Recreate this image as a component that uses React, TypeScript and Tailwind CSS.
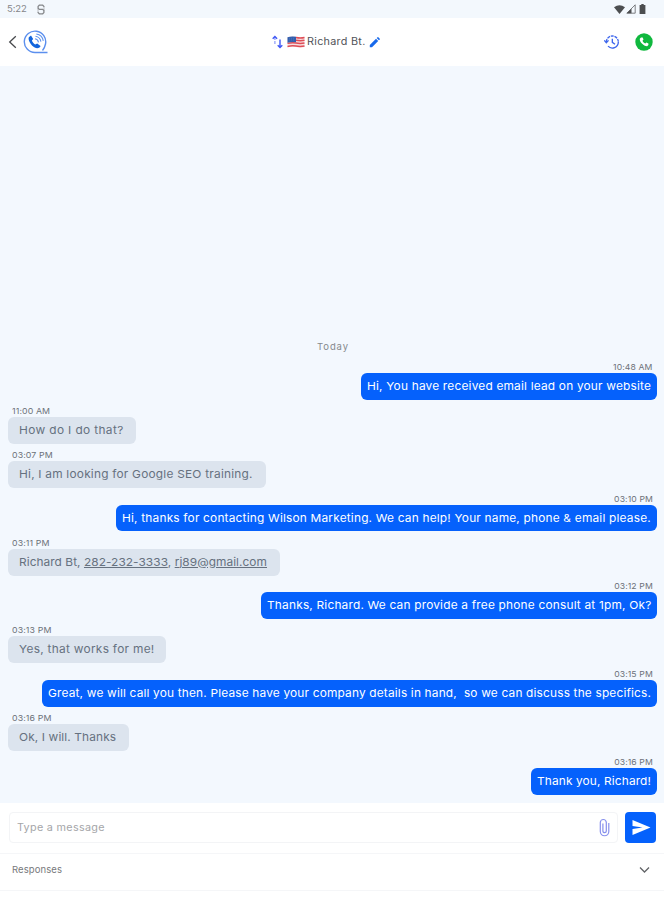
import clsx from "clsx";
import type { ReactNode } from "react";

type Message = {
  time: string;
  mine?: boolean;
  body: ReactNode;
  width: string;
  tracking: string;
};

const messages: Message[] = [
  {
    time: "10:48 AM",
    mine: true,
    body: "Hi, You have received email lead on your website",
    width: "w-[296px]",
    tracking: "tracking-[0.18px]",
  },
  {
    time: "11:00 AM",
    body: "How do I do that?",
    width: "w-[128px]",
    tracking: "tracking-[0.34px]",
  },
  {
    time: "03:07 PM",
    body: "Hi, I am looking for Google SEO training.",
    width: "w-[258px]",
    tracking: "tracking-[0.2px]",
  },
  {
    time: "03:10 PM",
    mine: true,
    body: "Hi, thanks for contacting Wilson Marketing. We can help! Your name, phone & email please.",
    width: "w-[541px]",
    tracking: "tracking-[0.18px]",
  },
  {
    time: "03:11 PM",
    body: (
      <>
        Richard Bt, <span className="underline">282-232-3333</span>,{" "}
        <span className="underline">rj89@gmail.com</span>
      </>
    ),
    width: "w-[272px]",
    tracking: "tracking-[0.05px]",
  },
  {
    time: "03:12 PM",
    mine: true,
    body: "Thanks, Richard. We can provide a free phone consult at 1pm, Ok?",
    width: "w-[396px]",
    tracking: "tracking-[0.18px]",
  },
  {
    time: "03:13 PM",
    body: "Yes, that works for me!",
    width: "w-[158px]",
    tracking: "tracking-[0.26px]",
  },
  {
    time: "03:15 PM",
    mine: true,
    body: "Great, we will call you then. Please have your company details in hand,  so we can discuss the specifics.",
    width: "w-[615px]",
    tracking: "tracking-[0.16px]",
  },
  {
    time: "03:16 PM",
    body: "Ok, I will. Thanks",
    width: "w-[121px]",
    tracking: "tracking-[0.1px]",
  },
  {
    time: "03:16 PM",
    mine: true,
    body: "Thank you, Richard!",
    width: "w-[126px]",
    tracking: "tracking-[0.12px]",
  },
];

function StatusBar() {
  return (
    <div className="flex h-[18px] shrink-0 items-center bg-[#f3f8fd] pr-[18px] pl-[7px] text-[#85878a]">
      <span className="w-[20px] text-[9.5px] leading-none tracking-[-0.1px]">5:22</span>
      <svg className="ml-[9px]" width="10" height="11" viewBox="0 0 10 11" fill="none" stroke="currentColor">
        <path d="M7.900 3.300V2.400L6.700 1.200H3.300L2.100 2.400v1.800l1.200 1.200h3.400l1.200 1.200v2L6.700 9.800H3.300L2.100 8.600v-.9" strokeWidth="1.300" />
        <path d="M2 4.500v3M8 3.500v3" strokeWidth=".5" />
      </svg>
      <div className="ml-auto flex items-center text-[#4c4e50]">
        <svg width="11" height="9" viewBox="0 0 11 9" fill="currentColor">
          <path d="M0 2.3Q5.5-1.8 11 2.3L5.5 9z" />
        </svg>
        <svg className="ml-px" width="10" height="10" viewBox="0 0 10 10">
          <path d="M.8 9.2 9.2.8v8.4z" fill="none" stroke="currentColor" strokeWidth=".7" />
          <path d="M.8 9.2 5.5 4.5v4.7z" fill="currentColor" />
        </svg>
        <svg className="ml-[3px]" width="7" height="10" viewBox="0 0 7 10" fill="currentColor">
          <path d="M2.3 0h2.4v1H6.4v9H.6V1h1.7z" />
        </svg>
      </div>
    </div>
  );
}

function UsFlag() {
  return (
    <svg className="ml-[4px]" width="18" height="12" viewBox="0 0 18 12">
      <path d="M.5 1.2Q5-.3 9 .8t8.500 0v10.100q-4.500 1.100-8.500 0t-8.500.300z" fill="#f6dfe1" />
      <path
        d="M9 1.500q4.500 1 8.500 0M9 4.300q4.500.900 8.500 0M.5 7.400Q5 6.200 9 7t8.500 0M.5 10.500Q5 9.300 9 10.100t8.500 0"
        fill="none"
        stroke="#df4d57"
        strokeWidth="1.500"
      />
      <path d="M.5 1.200Q5-.2 9 .800v5.500q-4-.900-8.500.400z" fill="#315fae" />
      <path d="M2 2.300h6M2 4h6" stroke="#6485c2" strokeWidth=".5" strokeDasharray="1 1" />
    </svg>
  );
}

function Header() {
  return (
    <header className="flex h-[48px] shrink-0 items-center bg-white pr-[11px] pl-[8px]">
      <svg width="9" height="14" viewBox="0 0 9 14" fill="none" stroke="#47494c" strokeWidth="1.3">
        <path d="M7.800 1.200 1.700 7l6.100 5.800" />
      </svg>
      <svg className="ml-[6px]" width="25" height="24" viewBox="0 0 25 24" fill="none">
        <path d="M24.500 22.500H12A10.700 10.700 0 1 1 22.500 14q-.8 4-3 6.500" stroke="#5b8fee" strokeWidth="1.400" />
        <path
          d="M8 5.500 5.800 7.200C4.500 10.500 9.300 17.800 14 18.300c1.800.1 3.500-1.200 3.500-2.300l-3.300-2.500-2 1c-1.500-.7-2.800-2.500-3.300-4L10.200 9z"
          fill="#1265dc"
        />
        <path d="M12 8.800q3 .5 3.500 3.500M12.500 6.300q4.600.8 5.400 5.400M13.300 4q6 1 7 6.800" stroke="#5f94ee" strokeWidth="1.100" />
      </svg>
      <div className="flex flex-1 items-center pl-[224px]">
        <svg width="11" height="14" viewBox="0 0 11 14" fill="none" stroke="#3f58f5" strokeWidth="1.400">
          <path d="M.7 3.800 2.900 1.600l2.200 2.200M5.700 10.300l2.300 2.200 2.300-2.200M8 4.500v8" />
          <path d="M2.900 2v7" strokeWidth="1.100" strokeDasharray="3 1" opacity=".65" />
        </svg>
        <UsFlag />
        <div className="ml-[2px] flex h-[14px] w-[61px] items-center whitespace-nowrap">
          <span className="relative -top-px origin-left scale-x-[1.08] text-[10px] leading-none tracking-[0.26px] text-[#505258]">
            Richard Bt.
          </span>
        </div>
        <svg className="ml-px" width="11" height="11" viewBox="0 0 11 11" fill="#1769eb">
          <path d="M.8 8 7 1.800 9.200 4 3 10.200H.800zM7.700 1.100 8.600.2q.3-.3.700 0l1.500 1.500q.3.300 0 .700l-.9.900z" />
        </svg>
      </div>
      <svg width="16" height="16" viewBox="0 0 24 24" fill="none" stroke="#3d66ed" strokeWidth="2">
        <path d="M3.500 12a9 9 0 0 1 18 0" strokeDasharray="4.500 1.200" />
        <path d="M21.500 12a9 9 0 0 1-15.500 6.200" />
        <path d="M.5 9.500 3.500 13l3.300-3.500M12.500 7v5.500l4 3" />
      </svg>
      <svg className="ml-[15px]" width="18" height="18" viewBox="0 0 18 18">
        <circle cx="9" cy="9" r="8.700" fill="#10b83e" />
        <path
          d="M6 4.500 4.800 5.700C4.300 8.700 8.500 13 12.100 13.200l1.300-1.300v-1.500l-2-.9-1.100 1C9 9.900 8.100 9 7.500 7.700l1-1.100-.8-2z"
          fill="#fff"
        />
      </svg>
    </header>
  );
}

function Bubble({ message }: { message: Message }) {
  return (
    <div className={clsx("flex h-[43.9px] shrink-0 flex-col", message.mine ? "items-end" : "items-start")}>
      <span
        className={clsx(
          "h-[12px] text-[8px] leading-[12px] tracking-[0.1px] text-[#6c7179]",
          message.mine ? "mr-[4px] origin-right scale-x-[1.08]" : "ml-[5px] origin-left scale-x-[1.1]",
        )}
      >
        {message.time}
      </span>
      <div
        className={clsx(
          "rounded-[6px] text-[11px] leading-[26px] whitespace-pre",
          message.mine
            ? "h-[26.5px] bg-[#0561fc] pl-[5.5px] text-white"
            : "ml-[0.5px] h-[27px] bg-[#dce4ee] pl-[11.5px] text-[#66717f]",
          message.width,
        )}
      >
        <span className={clsx("inline-block origin-left scale-x-[1.08]", message.tracking)}>{message.body}</span>
      </div>
    </div>
  );
}

function Composer() {
  return (
    <div className="flex h-[50px] shrink-0 items-center bg-white pr-[8px] pb-[2px] pl-[9px]">
      <div className="flex h-[31px] w-[609px] items-center rounded-[4px] border border-[#f3f4f6] pr-[7px] pl-[7px]">
        <span className="origin-left scale-x-[1.08] text-[10px] tracking-[0.28px] text-[#a5a6a9]">
          Type a message
        </span>
        <svg className="ml-auto" width="11" height="19" viewBox="0 0 11 19" fill="none" stroke="#8790ed" strokeWidth="1.200">
          <path d="M9.800 5v8.500a4.200 4.200 0 0 1-8.500 0V4.500a3 3 0 0 1 6 0V13a1.700 1.700 0 0 1-3.400 0V5.500" />
        </svg>
      </div>
      <button className="ml-auto flex h-[31px] w-[31px] items-center justify-center rounded-[4px] bg-[#0561fc] pl-[2px]">
        <svg width="19" height="17" viewBox="0 0 19 17" fill="#fff">
          <path d="M.5 1 18.500 8.500.5 16V10l10-1.500L.5 7z" />
        </svg>
      </button>
    </div>
  );
}

export default function App() {
  return (
    <div className="flex h-[900px] w-[664px] flex-col overflow-hidden bg-white font-['Inter',sans-serif]">
      <StatusBar />
      <Header />
      <main className="flex h-[737px] shrink-0 flex-col bg-[#f3f8fe] px-[7px] pt-[275px]">
        <div className="h-[20px] pl-[2px] text-center text-[9.5px] leading-[12px] tracking-[0.9px] text-[#85888d]">
          Today
        </div>
        {messages.map((message, i) => (
          <Bubble key={i} message={message} />
        ))}
      </main>
      <Composer />
      <div className="flex h-[38px] shrink-0 items-center justify-between border-y border-[#f5f6f8] pr-[14px] pb-[4px] pl-[12px]">
        <span className="text-[9.5px] tracking-[0.1px] text-[#77797c]">Responses</span>
        <svg width="11" height="8" viewBox="0 0 11 8" fill="none" stroke="#626467" strokeWidth="1.3">
          <path d="m1 1.500 4.500 4.500L10 1.500" />
        </svg>
      </div>
    </div>
  );
}
